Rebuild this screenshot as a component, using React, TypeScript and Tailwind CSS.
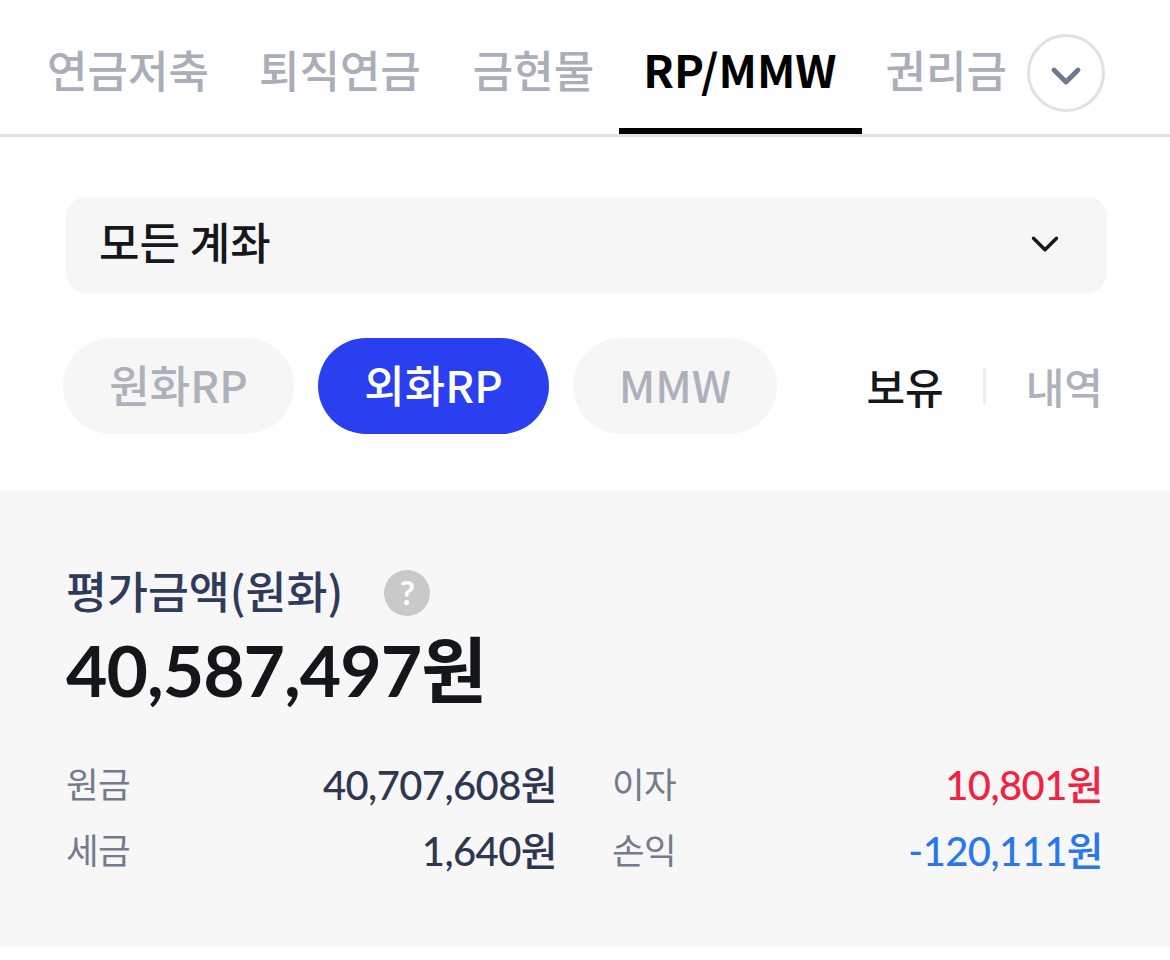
import { ChevronDown } from 'lucide-react';

const tabs = [
  { label: '연금저축', spacing: 'pl-[26px] pr-[24px]' },
  { label: '퇴직연금', spacing: 'pl-[26px] pr-[26px]' },
  { label: '금현물', spacing: 'pl-[26px] pr-[25px]' },
];

const latoStack = { fontFamily: 'Lato, "Noto Sans CJK KR", sans-serif' };
const notoStack = { fontFamily: '"Noto Sans CJK KR", sans-serif' };

function SummaryRow({
  leftLabel,
  leftValue,
  rightLabel,
  rightValue,
  rightColor,
}: {
  leftLabel: string;
  leftValue: string;
  rightLabel: string;
  rightValue: string;
  rightColor: string;
}) {
  return (
    <div className="flex items-center h-[66px] text-[40px] font-medium tracking-[-0.6px]">
      <span className="w-[120px] font-normal text-[#737b8c] text-[35.5px]">{leftLabel}</span>
      <span className="w-[371px] text-right text-[#2e3650]">{leftValue}</span>
      <span className="ml-[55px] w-[100px] font-normal text-[#737b8c] text-[35.5px]">{rightLabel}</span>
      <span className={`flex-1 text-right ${rightColor}`}>{rightValue}</span>
    </div>
  );
}

export default function App() {
  return (
    <div className="w-[1170px] h-[960px] bg-white overflow-hidden" style={notoStack}>
      <div className="relative h-[137px] border-b-[3px] border-[#dfe1e5] pl-[21px]">
        <div className="flex h-[134px]">
          {tabs.map((tab) => (
            <div
              key={tab.label}
              className={`${tab.spacing} pt-[39px] text-[44px] leading-[60px] font-medium text-[#a9aeb8] whitespace-nowrap`}
            >
              {tab.label}
            </div>
          ))}
          <div className="pl-[24px] pr-[26px] h-[134px] border-b-[6px] border-black pt-[39px] text-center text-[45px] leading-[60px] font-bold text-black whitespace-nowrap">
            RP/MMW
          </div>
          <div className="pl-[23px] pr-[25px] pt-[39px] text-[44px] leading-[60px] font-medium text-[#a9aeb8] whitespace-nowrap">
            권리금
          </div>
        </div>
        <div className="absolute left-[1027px] top-[34px] w-[78px] h-[78px] rounded-full bg-white border-[3px] border-[#dfe1e5] flex items-center justify-center">
          <ChevronDown className="w-[48px] h-[48px] text-[#6f7a8f] translate-y-[3px]" strokeWidth={2.4} />
        </div>
      </div>

      <div className="px-[66px] pt-[60px]">
        <div className="h-[96px] w-[1041px] rounded-[20px] bg-[#f6f6f7] flex items-center justify-between pl-[33px] pr-[39px]">
          <span className="text-[44px] font-medium text-[#15171c] -translate-y-[4px]">모든 계좌</span>
          <ChevronDown className="w-[46px] h-[46px] text-[#15171c] -translate-y-[1px]" strokeWidth={1.8} />
        </div>
      </div>

      <div className="flex items-center pl-[63px] pr-[68px] mt-[45px] h-[96px]">
        <div className="w-[231px] h-[96px] rounded-full bg-[#f6f6f7] flex items-center justify-center pb-[4px] text-[44px] font-medium text-[#adb1ba]">
          원화RP
        </div>
        <div className="ml-[24px] w-[231px] h-[96px] rounded-full bg-[#2a3ff0] flex items-center justify-center pb-[4px] text-[44px] font-medium text-white">
          외화RP
        </div>
        <div className="ml-[24px] w-[204px] h-[96px] rounded-full bg-[#f6f6f7] flex items-center justify-center pb-[4px] text-[44px] font-medium text-[#adb1ba]">
          MMW
        </div>
        <div className="ml-auto flex items-center text-[42px] font-medium">
          <span className="text-[#15171c] -translate-y-[1px]">보유</span>
          <span className="mx-[39px] w-[3px] h-[36px] bg-[#eceef0]" />
          <span className="text-[#adb1ba] -translate-y-[1px] translate-x-[1px]">내역</span>
        </div>
      </div>

      <div className="mt-[57px] h-[456px] bg-[#f7f7f8] px-[66px] pt-[72px]" style={latoStack}>
        <div className="flex items-center h-[60px]">
          <span className="text-[44.5px] font-medium text-[#2f3b5b] -translate-y-[3px]" style={notoStack}>
            평가금액(원화)
          </span>
          <span className="ml-[41px] w-[46px] h-[46px] rounded-full bg-[#c9c9c9] flex items-center justify-center text-[33px] font-bold text-white">
            ?
          </span>
        </div>
        <div className="mt-[4px] text-[71.5px] leading-[84px] font-bold text-[#14161a] tracking-[-1px]">
          40,587,497원
        </div>
        <div className="mt-[41px] w-[1037px]">
          <SummaryRow
            leftLabel="원금"
            leftValue="40,707,608원"
            rightLabel="이자"
            rightValue="10,801원"
            rightColor="text-[#f5213f]"
          />
          <SummaryRow
            leftLabel="세금"
            leftValue="1,640원"
            rightLabel="손익"
            rightValue="-120,111원"
            rightColor="text-[#2877f0]"
          />
        </div>
      </div>
    </div>
  );
}
